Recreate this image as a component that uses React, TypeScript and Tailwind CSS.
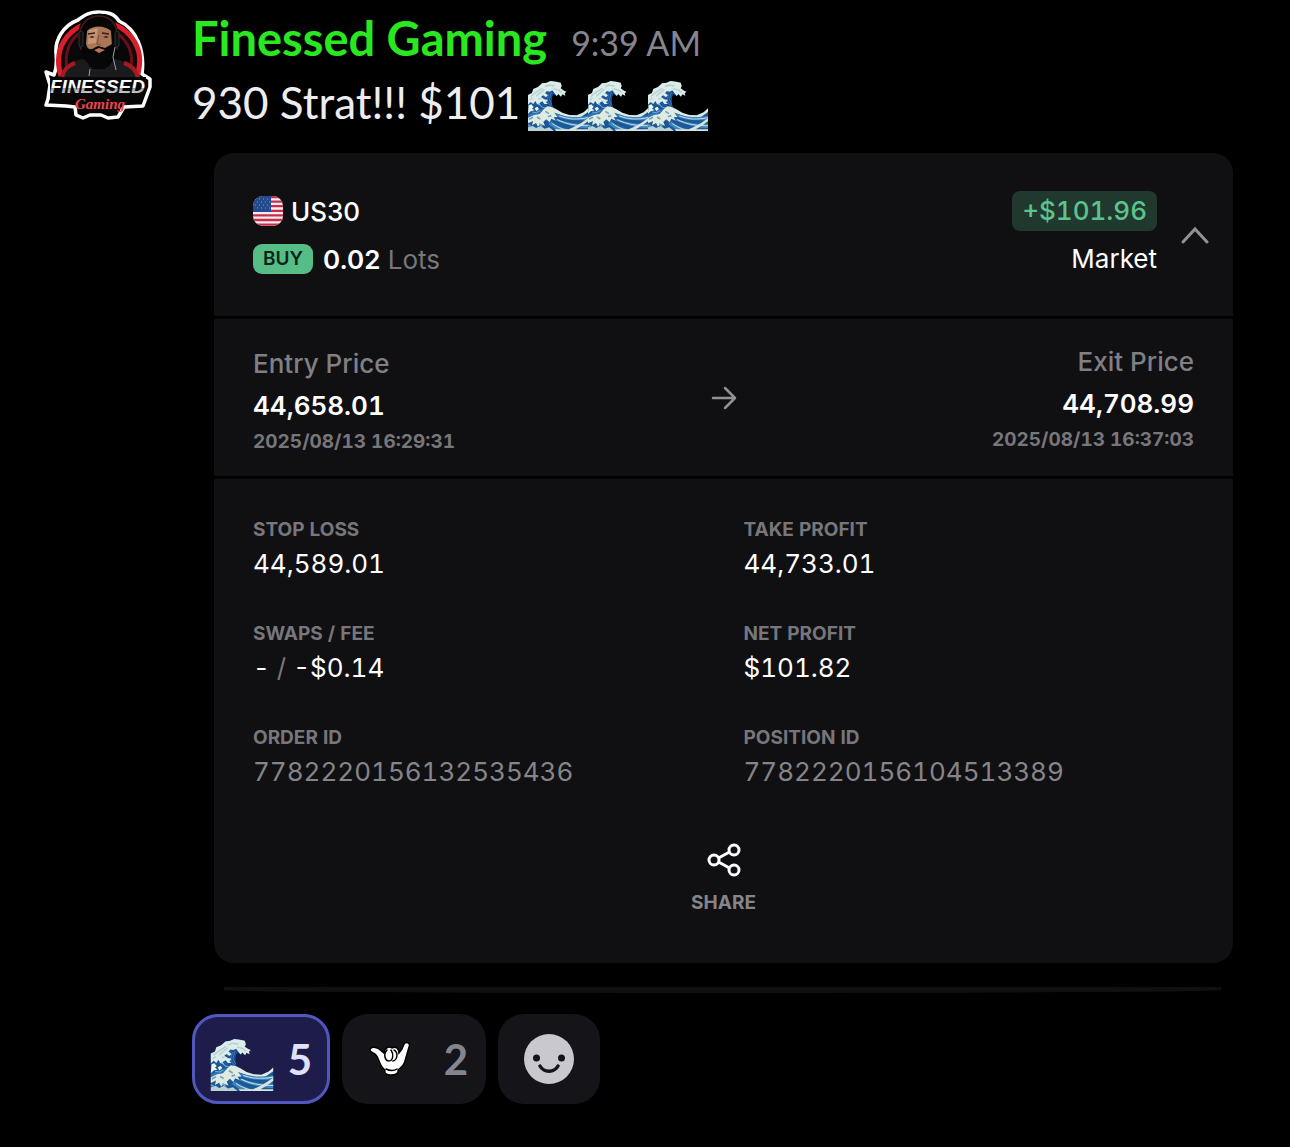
import { useState } from "react";

const stats = [
  { label: "STOP LOSS", value: "44,589.01" },
  { label: "TAKE PROFIT", value: "44,733.01" },
  { label: "SWAPS / FEE", value: "-$0.14", prefix: "-" },
  { label: "NET PROFIT", value: "$101.82" },
  { label: "ORDER ID", value: "7782220156132535436", muted: true },
  { label: "POSITION ID", value: "7782220156104513389", muted: true },
];

function Wave({ className }: { className: string }) {
  return (
    <svg viewBox="0 0 180 150" className={className} aria-label="wave" role="img">
      <path
        d="M0 42 L12 36 L16 24 L30 18 L42 7 L56 5 L68 0 L84 2 L98 5 L101 15 L98 22 L108 29 L115 32 L110 37 L112 44 L103 40 L99 47 L91 39 L86 45 L76 39 L70 52 L70 70 L79 84 L94 92 L116 101 L145 103 L166 95 L180 82 V150 H0 Z"
        fill="#1c5798"
      />
      {/* inside of the curl */}
      <path d="M59 38 L76 30 L72 50 L71 72 L80 86 L62 79 L50 61 Z" fill="#164b8e" />
      <path d="M63 38 L57 58 L69 79 M70 34 L64 56 L72 73" stroke="#3d82bd" strokeWidth="2.5" fill="none" />
      {/* foam on the crest */}
      <path
        d="M0 42 L12 36 L16 24 L30 18 L42 7 L56 5 L68 0 L84 2 L98 5 L101 15 L98 22 L108 29 L115 32 L110 37 L112 44 L103 40 L99 47 L91 39 L86 45 L79 36 L73 28 L65 32 L57 30 L51 36 L60 43 L54 49 L45 43 L39 48 L49 55 L60 57 L54 64 L60 69 L49 69 L43 61 L34 66 L38 73 L27 69 L22 60 L16 69 L8 63 L0 71 Z"
        fill="#dcece8"
      />
      <path
        d="M8 47 L20 37 L32 29 L43 22 M24 46 L36 36 L49 25 M50 17 L64 12 L79 15 M76 23 L91 27 L101 34 M5 57 L14 51 M31 54 L40 52"
        stroke="#b3cfd0"
        strokeWidth="4"
        fill="none"
      />
      <path d="M2 73 L10 70 L17 78 L12 83 L20 88 L8 91 L0 99 Z M20 82 L28 77 L33 84 L25 91 Z" fill="#ecf6ef" />
      <path d="M0 101 L28 89 L50 82 L34 99 L0 110 Z" fill="#2c72b4" />
      <path d="M30 68 L44 79 L56 81 M12 93 L25 95 L37 89" stroke="#72a9cb" strokeWidth="3" fill="none" />
      {/* front swell */}
      <path
        d="M0 110 L18 102 L35 99 L47 85 L58 76 L71 78 L84 84 L103 95 L124 102 L146 103 L167 94 L180 82 V93 L160 107 L145 111 L119 109 L93 100 L79 95 L89 108 L77 109 L84 119 L70 113 L65 124 L55 115 L46 123 L51 134 L37 129 L30 137 L24 126 L12 133 L15 120 L0 127 Z"
        fill="#dfeae0"
      />
      <path
        d="M82 99 C110 105 130 113 180 105 V116 C140 121 111 116 92 109 Z M87 113 C116 125 145 130 180 129 V142 C144 142 111 130 80 118 Z M70 121 C91 139 116 144 137 150 H90 L61 129 Z"
        fill="#3d86bf"
      />
      <path
        d="M94 105 C124 116 148 116 180 110 M88 116 C116 130 148 135 180 134 M73 128 C91 141 111 146 120 150"
        stroke="#c5dde0"
        strokeWidth="3"
        fill="none"
      />
      <path d="M0 139 L14 135 L24 141 L38 135 L50 143 L64 139 L77 150 H0 Z" fill="#b8d2d6" />
      <path d="M3 115 L15 109 M27 108 L37 114 M52 91 L63 98 M60 107 L70 104 M0 132 L9 137 M34 128 L43 137" stroke="#75a5c5" strokeWidth="5" />
      <path d="M106 150 C134 142 152 132 180 112 V121 C160 137 145 144 132 150 Z M80 145 L180 145 V150 H84 Z" fill="#d5e4df" />
    </svg>
  );
}

function Avatar() {
  return (
    <svg viewBox="0 0 108 112" className="mt-0.5 h-28 w-27 shrink-0" role="img" aria-label="Finessed Gaming logo">
      <path
        d="M54 2 C43 2 38 7 34 10 C18 16 11 31 12 43 C13 53 12 60 10 65 L2 62 L6 75 L4 89 L2 95 L22 96 L31 97 L32 105 L39 108 L46 105 L57 105 L64 108 L74 107 L80 97 L99 96 L106 77 L106 69 L98 64 C101 41 93 19 75 11 C70 3 63 2 54 2 Z"
        fill="#050505"
        stroke="#fff"
        strokeWidth="3.5"
        strokeLinejoin="round"
      />
      <path d="M17 66 C7 34 30 12 55 12 C82 12 103 36 93 66" fill="#180708" stroke="#d91f2b" strokeWidth="5" />
      <path d="M24 64 C17 35 33 18 54 18 C77 18 94 39 85 64" fill="#080808" stroke="#651018" strokeWidth="3" />
      <path d="M17 68 C20 55 30 51 39 49 L50 56 L66 48 C80 50 91 55 96 69 Z" fill="#1b1b1e" />
      <path d="M18 67 C20 59 25 55 31 53 M80 53 C89 56 92 61 94 68" stroke="#a71921" strokeWidth="4" fill="none" />
      {/* hair, headset and face */}
      <path d="M37 42 C32 25 33 8 49 5 C64 0 74 10 74 24 L73 46 L64 57 H46 Z" fill="#050506" />
      <path d="M37 40 C32 22 38 8 53 6 C69 5 76 17 73 40" stroke="#44191b" strokeWidth="1.5" fill="none" />
      <path d="M43 21 C48 15 61 15 67 21 L68 36 L64 48 L56 51 L47 47 L42 34 Z" fill="#a97658" />
      <path d="M45 20 L54 18 L52 33 L44 34 Z" fill="#c99474" />
      <path d="M44 24 L51 23 M58 23 L65 24" stroke="#35211a" strokeWidth="1.5" />
      <path d="M45 27 L48 26 L51 27 L48 28 Z M59 27 L62 26 L65 27 L62 28 Z" fill="#35211a" />
      <path d="M55 25 L53 34 L57 35" stroke="#825039" fill="none" />
      <path d="M41 35 C45 40 47 40 50 38 L54 36 L61 38 L68 34 L68 49 L61 59 H49 L41 49 Z" fill="#080707" />
      <path d="M50 40 L55 38 L61 40 L55 43 Z" fill="#b8705e" />
      <rect x="35" y="21" width="4" height="16" rx="2" fill="#101012" stroke="#303035" />
      <rect x="71" y="21" width="4" height="16" rx="2" fill="#101012" stroke="#303035" />
      <path d="M46 59 L45 66 M71 37 L69 47 L72 60" stroke="#a0a0a0" strokeWidth="1" fill="none" />
      <path d="M6 67 H102 L97 90 H6 Z" fill="#070707" />
      <defs>
        <linearGradient id="steel" x1="0" y1="0" x2="0" y2="1">
          <stop offset="55%" stopColor="#fff" />
          <stop offset="57%" stopColor="#9fa1a4" />
          <stop offset="100%" stopColor="#e5e5e5" />
        </linearGradient>
      </defs>
      <text x="6" y="83" fontFamily="Liberation Sans" fontSize="19" fontWeight="700" fontStyle="italic" fill="url(#steel)">
        FINESSED
      </text>
      <text x="31" y="99" fontFamily="Liberation Serif" fontSize="15" fontWeight="700" fontStyle="italic" fill="#ed4350">
        Gaming
      </text>
    </svg>
  );
}

function Flag() {
  return (
    <svg viewBox="0 0 30 30" className="size-7.5 rounded-[10px]" role="img" aria-label="United States">
      <rect width="30" height="30" fill="#f4edf0" />
      <path d="M0 1 H30 M0 5.6 H30 M0 10.2 H30 M0 14.8 H30 M0 19.4 H30 M0 24 H30 M0 28.6 H30" stroke="#c92c4a" strokeWidth="2.3" />
      <rect width="18" height="16" fill="#234a8d" />
      <path d="M2 3 H18 M4 6 H18 M2 9 H18 M4 12 H18" stroke="#8097c1" strokeWidth="1" strokeDasharray="1 3" />
    </svg>
  );
}

function Shaka() {
  return (
    <svg viewBox="0 0 42 36" className="h-9 w-10.5" role="img" aria-label="call me hand">
      <path
        d="M1 9 C1 6 6 5 10 8 L15 12 C16 6 20 5 23 7 C27 5 30 8 30 12 C33 9 34 6 35 3 C37 0 42 2 40 6 L36 20 C35 25 32 27 29 29 C30 32 27 34 22 34 C17 34 15 32 16 29 C10 25 11 19 7 14 C5 11 1 12 1 9 Z"
        fill="#fff"
        stroke="#000"
        strokeWidth="1.5"
      />
      <path
        d="M18 9 C14 13 16 20 20 20 C24 20 25 13 22 9 M25 9 C30 12 28 19 24 20 M17 28 C21 30 25 30 28 28"
        stroke="#000"
        strokeWidth="1.5"
        strokeLinecap="round"
        fill="none"
      />
    </svg>
  );
}

function App() {
  const [open, setOpen] = useState(true);
  const [reacted, setReacted] = useState(true);

  return (
    <div className="min-h-screen bg-black pt-2 pr-[57px] pb-10 pl-11 font-['Inter',sans-serif] text-white">
      <div className="flex gap-10">
        <Avatar />
        <main className="min-w-0 flex-1">
          <div className="flex h-15 items-baseline gap-6 font-['Lato',sans-serif]">
            <h1 className="text-[47px] leading-15 font-bold text-[#2ae820]">Finessed Gaming</h1>
            <time className="text-[34px] text-[#85858f]">9:39 AM</time>
          </div>
          <p className="flex h-17 items-center font-['Lato',sans-serif] text-[44px] text-[#ededf0]">
            <span className="mr-2">930 Strat!!! $101</span>
            <Wave className="mt-2 h-[50px] w-15" />
            <Wave className="mt-2 h-[50px] w-15" />
            <Wave className="mt-2 h-[50px] w-15" />
          </p>

          <article className="mt-[17px] ml-5.5 overflow-hidden rounded-[20px] bg-[#101013]">
            <header className="flex h-[166px] items-start justify-between border-b-3 border-black pt-[38px] pr-6 pl-[39px] text-[26px]">
              <div>
                <h2 className="flex h-10 items-center gap-2 font-medium">
                  <Flag />
                  US30
                </h2>
                <div className="mt-2 flex h-10 items-center gap-2.5">
                  <span className="rounded-[9px] bg-[#55bd85] px-2.5 text-[19px] leading-[30px] font-semibold text-[#0d2418]">BUY</span>
                  <span>
                    <span className="font-semibold">0.02</span> <span className="text-[#77777b]">Lots</span>
                  </span>
                </div>
              </div>
              <div className="flex items-center gap-6">
                <div className="text-right">
                  <div className="rounded-lg bg-[#20382e] px-2.5 leading-10 font-medium text-[#5bc48d] tabular-nums">+$101.96</div>
                  <div className="mt-2 leading-10">Market</div>
                </div>
                <button type="button" aria-label="Toggle details" onClick={() => setOpen(!open)}>
                  <svg viewBox="0 0 28 18" className="h-4.5 w-7" fill="none" stroke="#929296" strokeWidth="3" strokeLinecap="round">
                    <path d="M2 16 L14 3 L26 16" />
                  </svg>
                </button>
              </div>
            </header>

            <section className="flex h-40 items-center justify-between border-b-3 border-black px-[39px] text-[26px] tabular-nums">
              <div className="flex-1 pt-1">
                <h3 className="leading-10 font-medium text-[#808084]">Entry Price</h3>
                <p className="leading-11 font-semibold">44,658.01</p>
                <time className="block text-[19px] leading-7 font-bold text-[#77777b]">2025/08/13 16:29:31</time>
              </div>
              <svg viewBox="0 0 26 26" className="size-6.5" fill="none" stroke="#929296" strokeWidth="2.5" strokeLinecap="round" strokeLinejoin="round">
                <path d="M2 13 H24 M14 3 L24 13 L14 23" />
              </svg>
              <div className="flex-1 text-right">
                <h3 className="leading-10 font-medium text-[#808084]">Exit Price</h3>
                <p className="leading-11 font-semibold">44,708.99</p>
                <time className="block text-[19px] leading-7 font-bold text-[#77777b]">2025/08/13 16:37:03</time>
              </div>
            </section>

            {open && (
              <section className="px-[39px] pt-[37px] pb-[46px]">
                <dl className="grid grid-cols-2 gap-x-10 gap-y-9 tabular-nums">
                  {stats.map((s) => (
                    <div key={s.label}>
                      <dt className="text-[19px] leading-7 font-bold text-[#77777b]">{s.label}</dt>
                      <dd className={s.muted ? "text-[26px] leading-10 text-[#858589]" : "text-[26px] leading-10"}>
                        {s.prefix && (
                          <>
                            {s.prefix} <span className="text-[#77777b]">/</span>{" "}
                          </>
                        )}
                        {s.value}
                      </dd>
                    </div>
                  ))}
                </dl>
                <button type="button" className="mx-auto mt-[51px] flex flex-col items-center gap-3 text-[19px] leading-7 font-bold text-[#858589]">
                  <svg viewBox="0 0 34 34" className="size-8.5" fill="none" stroke="#fff" strokeWidth="3">
                    <circle cx="7" cy="17" r="5" />
                    <circle cx="27" cy="7" r="5" />
                    <circle cx="27" cy="27" r="5" />
                    <path d="M11.5 15 L22.5 9 M11.5 19 L22.5 25" />
                  </svg>
                  SHARE
                </button>
              </section>
            )}
          </article>
          <div className="mt-6 mr-3 ml-8 h-1.5 rounded-b-[50%] bg-[#101013]" />

          <div className="mt-[21px] flex gap-3 font-['Lato',sans-serif] text-[42px] font-bold">
            <button
              type="button"
              aria-pressed={reacted}
              onClick={() => setReacted(!reacted)}
              className="flex h-[90px] w-[138px] items-center justify-center gap-3.5 rounded-[26px] border-3 border-[#5057bd] bg-[#1d1c4b] text-[#e0e0fa]"
            >
              <Wave className="mt-3 h-[52px] w-16" />
              {reacted ? 5 : 4}
            </button>
            <button type="button" className="flex h-[90px] w-36 items-center justify-between rounded-[26px] bg-[#141419] pr-[18px] pl-[27px] text-[#85858f]">
              <Shaka />2
            </button>
            <button type="button" aria-label="Add reaction" className="flex h-[90px] w-[102px] items-center justify-center rounded-[26px] bg-[#141419]">
              <svg viewBox="0 0 50 50" className="size-12.5">
                <circle cx="25" cy="25" r="25" fill="#c8c8ce" />
                <circle cx="12.5" cy="24" r="3.5" fill="#141419" />
                <circle cx="37.5" cy="24" r="3.5" fill="#141419" />
                <path d="M16 32 C20 39 30 39 34 32" stroke="#141419" strokeWidth="3.5" strokeLinecap="round" fill="none" />
              </svg>
            </button>
          </div>
        </main>
      </div>
    </div>
  );
}

export default App;
